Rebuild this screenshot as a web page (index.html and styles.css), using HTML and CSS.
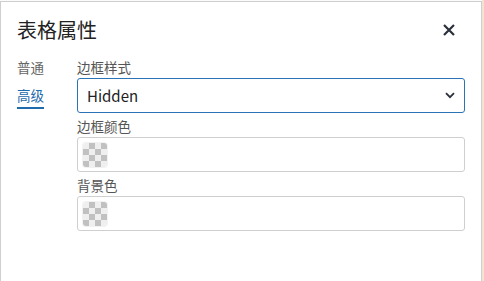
FILE: index.html
```html
<!DOCTYPE html>
<html lang="zh">
<head>
<meta charset="utf-8">
<link rel="stylesheet" href="styles.css">
</head>
<body>
<div class="page">
  <div class="dialog">
    <div class="header">
      <h1 class="title">表格属性</h1>
      <button class="close" aria-label="关闭">
        <svg width="12" height="12" viewBox="0 0 12 12"><path d="M1 1 L11 11 M11 1 L1 11" stroke="#2b303b" stroke-width="2.2" fill="none"/></svg>
      </button>
    </div>
    <div class="body">
      <div class="tabs">
        <div class="tab">普通</div>
        <div class="tab active">高级</div>
      </div>
      <div class="form">
        <div class="field">
          <div class="label">边框样式</div>
          <div class="select">
            <span class="value">Hidden</span>
            <svg class="chev" width="10" height="7" viewBox="0 0 10 7"><path d="M1 1.2 L5 5.2 L9 1.2" stroke="#2b303b" stroke-width="1.8" fill="none"/></svg>
          </div>
        </div>
        <div class="field">
          <div class="label">边框颜色</div>
          <div class="colorbox">
            <svg class="swatch" width="24" height="24" viewBox="0 0 24 24">
              <rect width="24" height="24" fill="#efefef"/>
              <path d="M6 0h6v6H6zM18 0h6v6h-6zM0 6h6v6H0zM12 6h6v6h-6zM6 12h6v6H6zM18 12h6v6h-6zM0 18h6v6H0zM12 18h6v6h-6z" fill="#c1c1c1"/>
            </svg>
          </div>
        </div>
        <div class="field">
          <div class="label">背景色</div>
          <div class="colorbox">
            <svg class="swatch" width="24" height="24" viewBox="0 0 24 24">
              <rect width="24" height="24" fill="#efefef"/>
              <path d="M6 0h6v6H6zM18 0h6v6h-6zM0 6h6v6H0zM12 6h6v6h-6zM6 12h6v6H6zM18 12h6v6h-6zM0 18h6v6H0zM12 18h6v6h-6z" fill="#c1c1c1"/>
            </svg>
          </div>
        </div>
      </div>
    </div>
  </div>
  <div class="strip"></div>
</div>
</body>
</html>
```

FILE: styles.css
```css
html, body {
  margin: 0;
  padding: 0;
  background: #fbfbfb;
}
body {
  font-family: "Noto Sans CJK SC", "Noto Sans", sans-serif;
  color: #222;
  overflow: hidden;
}
.page {
  display: flex;
  height: 281px;
}
.dialog {
  width: 482px;
  flex: none;
  box-sizing: border-box;
  margin-top: 1px;
  height: 300px;
  background: #fff;
  border: 1px solid #cfcfcf;
}
.strip {
  flex: 1;
  background: #f1e4d3;
}
.header {
  display: flex;
  justify-content: space-between;
  align-items: center;
  height: 56px;
  padding: 0 26px 0 16px;
  box-sizing: border-box;
}
.title {
  margin: 0;
  font-size: 20px;
  font-weight: 400;
  line-height: 28px;
  color: #222;
}
.close {
  border: 0;
  background: none;
  padding: 0;
  width: 12px;
  height: 12px;
  display: flex;
}
.body {
  display: flex;
  padding: 0 16px 0 16px;
}
.tabs {
  width: 60px;
  flex: none;
  display: flex;
  flex-direction: column;
}
.tab {
  font-size: 13.5px;
  line-height: 18px;
  color: #666;
  align-self: flex-start;
  padding-bottom: 10px;
}
.tab.active {
  color: #1f6bab;
  padding-bottom: 3px;
  border-bottom: 2px solid #1f6bab;
}
.form {
  flex: 1;
  display: flex;
  flex-direction: column;
  gap: 4px;
}
.label {
  font-size: 13.5px;
  line-height: 18px;
  color: #555;
  margin-bottom: 2px;
}
.select {
  height: 35px;
  box-sizing: border-box;
  border: 1px solid #2a73b6;
  border-radius: 3px;
  display: flex;
  align-items: center;
  justify-content: space-between;
  padding: 0 9px 0 9px;
}
.value {
  font-size: 15px;
  color: #222;
}
.colorbox {
  height: 35px;
  box-sizing: border-box;
  border: 1px solid #cfcfcf;
  border-radius: 3px;
  display: flex;
  align-items: flex-start;
  padding: 5px 5px 0;
}
.swatch {
  display: block;
  border-radius: 3px;
  box-shadow: 0 0 0 1px rgba(0,0,0,0.05);
}
```
